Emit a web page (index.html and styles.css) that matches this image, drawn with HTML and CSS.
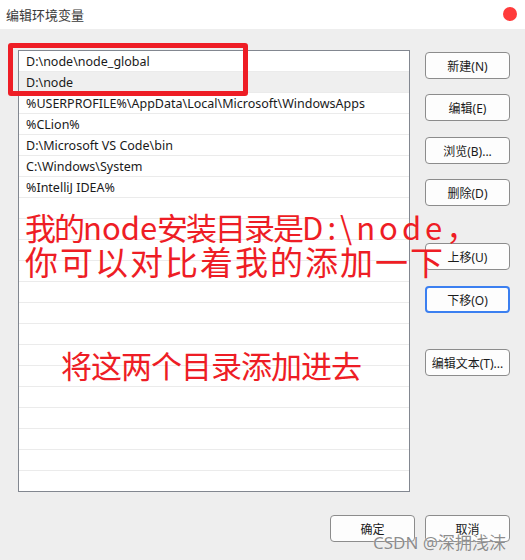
FILE: index.html
```html
<!DOCTYPE html>
<html lang="zh-CN">
<head>
<meta charset="utf-8">
<title>编辑环境变量</title>
<link rel="stylesheet" href="styles.css">
</head>
<body>
<div class="window">
  <div class="titlebar">
    <span class="title">编辑环境变量</span>
    <span class="close-dot"></span>
  </div>
  <div class="main">
    <div class="list">
      <div class="row">D:\node\node_global</div>
      <div class="row selected">D:\node</div>
      <div class="row">%USERPROFILE%\AppData\Local\Microsoft\WindowsApps</div>
      <div class="row">%CLion%</div>
      <div class="row">D:\Microsoft VS Code\bin</div>
      <div class="row">C:\Windows\System</div>
      <div class="row">%IntelliJ IDEA%</div>
      <div class="row"></div>
      <div class="row"></div>
      <div class="row"></div>
      <div class="row"></div>
      <div class="row"></div>
      <div class="row"></div>
      <div class="row"></div>
      <div class="row"></div>
      <div class="row"></div>
      <div class="row"></div>
      <div class="row"></div>
      <div class="row"></div>
      <div class="row"></div>
      <div class="row"></div>
    </div>
    <div class="side">
      <button class="btn">新建(N)</button>
      <button class="btn gap-a">编辑(E)</button>
      <button class="btn gap-b">浏览(B)...</button>
      <button class="btn gap-a">删除(D)</button>
      <button class="btn gap-big">上移(U)</button>
      <button class="btn focus gap-b">下移(O)</button>
      <button class="btn gap-big2">编辑文本(T)...</button>
    </div>
  </div>
  <div class="footer">
    <button class="btn">确定</button>
    <button class="btn">取消</button>
  </div>

  <div class="mark-box"></div>
  <div class="note note-main">
    <div class="l1">我的<span class="word">node</span>安装目录是<span class="path">D:\node</span>，</div>
    <div class="l2">你可以对比着我的添加一下</div>
  </div>
  <div class="note note-second">将这两个目录添加进去</div>
  <div class="watermark">CSDN @深拥浅沫</div>
</div>
</body>
</html>
```
FILE: styles.css
```css
* { box-sizing: border-box; }
html, body { margin: 0; padding: 0; }
body {
  background: #eeeeee;
  font-family: "Noto Sans", "Noto Sans CJK SC", sans-serif;
  color: #1a1a1a;
}
.window {
  position: relative;
  width: 525px;
  height: 560px;
  overflow: hidden;
  background: #eeeeee;
}
.titlebar {
  height: 29px;
  background: #ffffff;
  display: flex;
  align-items: center;
  justify-content: space-between;
  padding: 0 8px 1px 6px;
}
.title {
  font-family: "Noto Sans CJK SC", sans-serif;
  font-size: 13px;
  color: #3a3a3a;
}
.close-dot {
  width: 14px;
  height: 14px;
  border-radius: 50%;
  background: #ff3b3b;
}
.main {
  display: flex;
  align-items: flex-start;
  padding: 21px 0 0 18px;
  gap: 15px;
}
.list {
  width: 392px;
  height: 442px;
  border: 1px solid #828790;
  background: #ffffff;
  overflow: hidden;
}
.row {
  height: 21px;
  border-bottom: 1px solid #ebebeb;
  padding: 1px 0 0 7px;
  font-size: 12.5px;
  line-height: 20px;
  white-space: nowrap;
  color: #1a1a1a;
}
.row.selected { background: #efefef; }
.side {
  display: flex;
  flex-direction: column;
  width: 85px;
  padding-top: 2px;
}
.btn {
  width: 85px;
  height: 27px;
  border: 1px solid #8c8c8c;
  border-radius: 4px;
  background: #fdfdfd;
  font-family: "Noto Sans", "Noto Sans CJK SC", sans-serif;
  font-size: 12px;
  color: #1a1a1a;
  padding: 0;
  display: flex;
  align-items: center;
  justify-content: center;
}
.btn.focus { border: 2px solid #3b7ff0; }
.gap-a { margin-top: 15px; }
.gap-b { margin-top: 16px; }
.gap-big { margin-top: 37px; }
.gap-big2 { margin-top: 36px; }
.footer {
  display: flex;
  justify-content: flex-end;
  gap: 10px;
  padding-right: 15px;
  margin-top: 23px;
}
.footer .btn { width: 85px; }

/* annotations */
.mark-box {
  position: absolute;
  left: 8px;
  top: 43px;
  width: 240px;
  height: 53px;
  border: 5px solid #ee1d25;
  border-radius: 3px;
}
.note {
  position: absolute;
  color: #ee1d25;
  font-family: "Noto Sans CJK SC", sans-serif;
  white-space: nowrap;
}
.note-main {
  left: 25px;
  top: 210px;
  line-height: 34px;
}
.note-main .l1 { font-size: 31px; letter-spacing: -2px; }
.note-main .l1 .word { letter-spacing: 0; }
.note-main .l1 .path { letter-spacing: 4px; }
.note-main .l2 { font-size: 33px; letter-spacing: 2px; }
.note-second {
  left: 61px;
  top: 347px;
  font-size: 31px;
  line-height: 36px;
  letter-spacing: -1px;
}
.watermark {
  position: absolute;
  left: 373px;
  top: 529px;
  font-family: "Noto Sans", "Noto Sans CJK SC", sans-serif;
  font-size: 17px;
  color: rgba(120, 120, 120, 0.85);
  text-shadow: 0 0 1px #ffffff;
  white-space: nowrap;
}
```
